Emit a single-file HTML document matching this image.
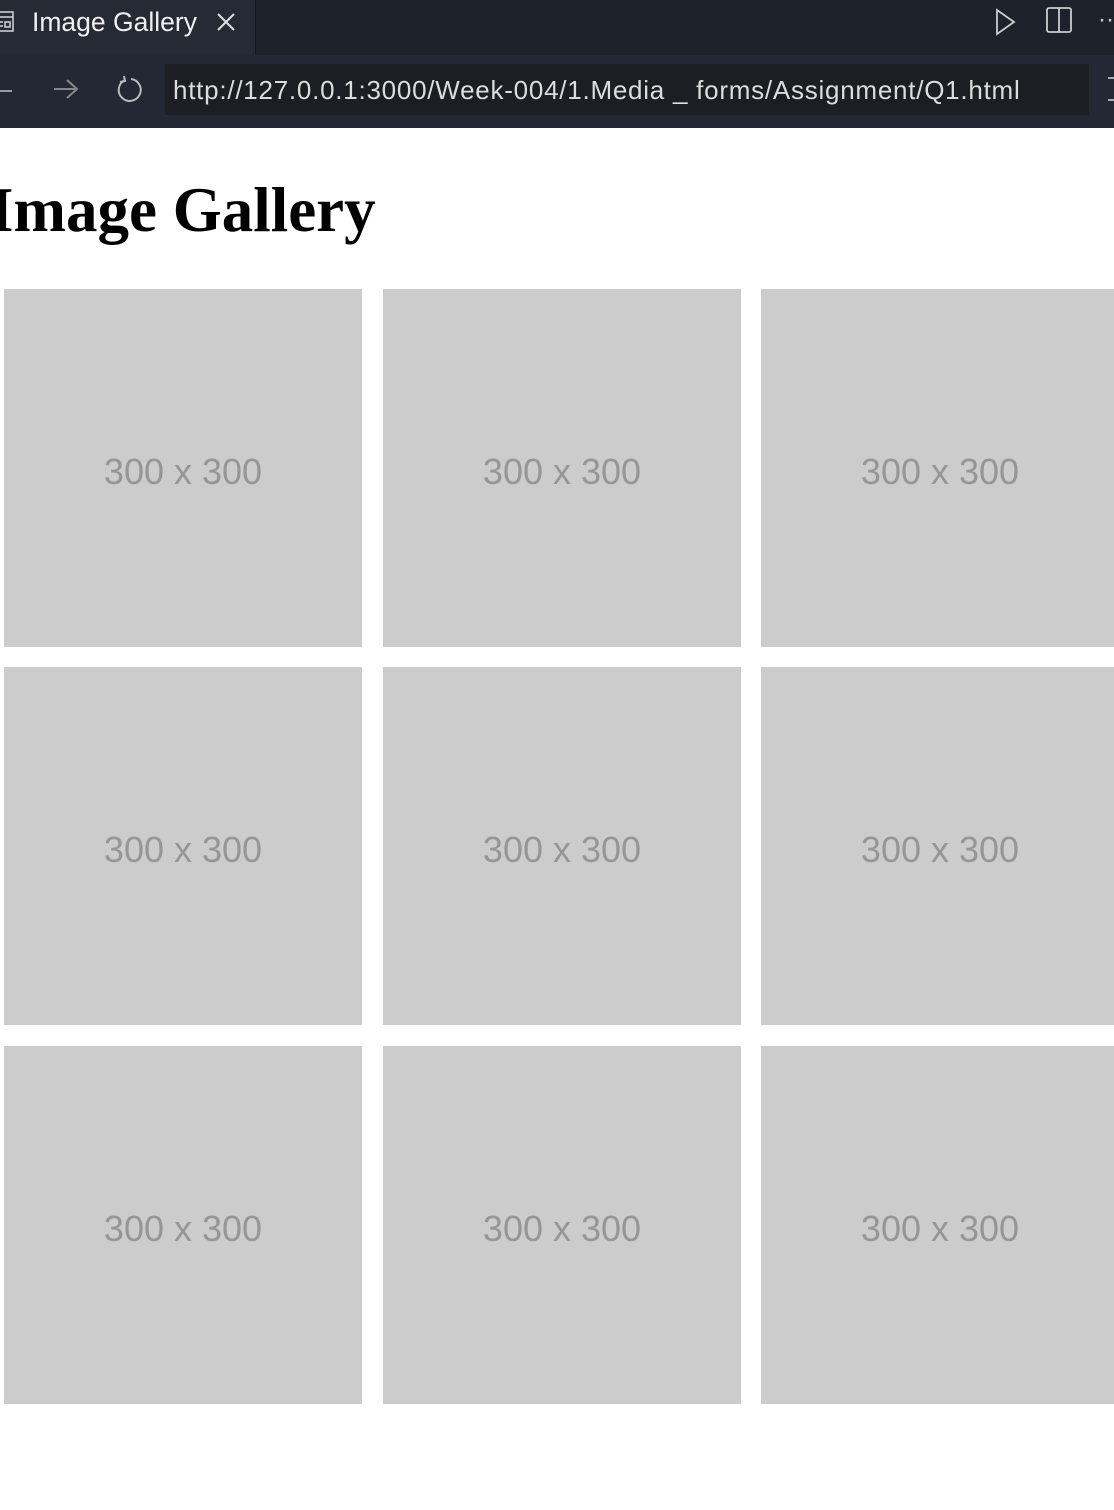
<!DOCTYPE html>
<html><head><style>
body{margin:0;width:1114px;height:1510px;background:#fff;overflow:hidden;position:relative;font-family:"Liberation Sans",sans-serif}
.tabbar{position:absolute;left:0;top:0;width:1114px;height:55px;background:#1e222b}
.tab{position:absolute;left:0;top:0;width:255px;height:55px;background:#252a35;border-right:1px solid #15171c}
.addr{position:absolute;left:0;top:55px;width:1114px;height:73px;background:#232834}
.input{position:absolute;left:165px;top:9px;width:924px;height:51px;background:#1c1e23;color:#dcdcdc;font-size:26px;letter-spacing:0.75px;line-height:53px;padding-left:8px;box-sizing:border-box;white-space:nowrap}
h1{position:absolute;left:-11px;top:170px;margin:0;font-family:"Liberation Serif",serif;font-weight:bold;font-size:63px;line-height:80px;color:#000}
.img{position:absolute;width:358px;height:358px;background:#cccccc;display:flex;align-items:center;justify-content:center}
.img span{color:#969696;font-size:36px;display:block;margin-top:8px}
</style></head><body>
<div class="tabbar">
<div class="tab">
<svg style="position:absolute;left:-4px;top:10px" width="22" height="24" viewBox="0 0 22 24" fill="none" stroke="#ccc" stroke-width="1.6"><rect x="1" y="2" width="16" height="19"/><line x1="1" y1="7" x2="17" y2="7"/><rect x="9" y="12" width="5" height="5"/><line x1="3" y1="12" x2="7" y2="12"/><line x1="3" y1="16" x2="7" y2="16"/></svg>
<div style="position:absolute;left:32px;top:6px;color:#f0f0f0;font-size:26.5px;line-height:32px">Image Gallery</div>
<svg style="position:absolute;left:216px;top:12px" width="20" height="20" stroke="#ddd" stroke-width="2"><line x1="2" y1="2" x2="18" y2="18"/><line x1="18" y1="2" x2="2" y2="18"/></svg>
</div>
<svg style="position:absolute;left:994px;top:8px" width="24" height="28" fill="none" stroke="#ccc" stroke-width="1.8"><path d="M3 2 L20 14 L3 26 Z"/></svg>
<svg style="position:absolute;left:1045px;top:6px" width="28" height="28" fill="none" stroke="#ccc" stroke-width="1.8"><rect x="2" y="2" width="24" height="24" rx="2"/><line x1="14" y1="2" x2="14" y2="26"/></svg>
<div style="position:absolute;left:1098px;top:0;color:#ccc;font-size:24px;line-height:40px">··</div>
</div>
<div class="addr">
<svg style="position:absolute;left:0;top:24px" width="14" height="24" stroke="#999" stroke-width="2"><line x1="0" y1="12" x2="12" y2="12"/></svg>
<svg style="position:absolute;left:52px;top:22px" width="28" height="24" fill="none" stroke="#888" stroke-width="2"><line x1="2" y1="12" x2="25" y2="12"/><path d="M15 3 L25 12 L15 21"/></svg>
<svg style="position:absolute;left:116px;top:20px" width="30" height="30" fill="none" stroke="#bbb" stroke-width="2"><path d="M9 5 A11 11 0 1 0 15 4"/><path d="M8 1 L9 6 L4 7"/></svg>
<div class="input">http://127.0.0.1:3000/Week-004/1.Media _ forms/Assignment/Q1.html</div>
<div style="position:absolute;left:1108px;top:22px;width:8px;height:24px;border-top:2px solid #aaa;border-bottom:2px solid #aaa;box-sizing:border-box"></div>
</div>
<h1>Image Gallery</h1>
<div class="img" style="left:4px;top:289px"><span>300 x 300</span></div>
<div class="img" style="left:383px;top:289px"><span>300 x 300</span></div>
<div class="img" style="left:761px;top:289px"><span>300 x 300</span></div>
<div class="img" style="left:4px;top:667px"><span>300 x 300</span></div>
<div class="img" style="left:383px;top:667px"><span>300 x 300</span></div>
<div class="img" style="left:761px;top:667px"><span>300 x 300</span></div>
<div class="img" style="left:4px;top:1046px"><span>300 x 300</span></div>
<div class="img" style="left:383px;top:1046px"><span>300 x 300</span></div>
<div class="img" style="left:761px;top:1046px"><span>300 x 300</span></div>
</body></html>
